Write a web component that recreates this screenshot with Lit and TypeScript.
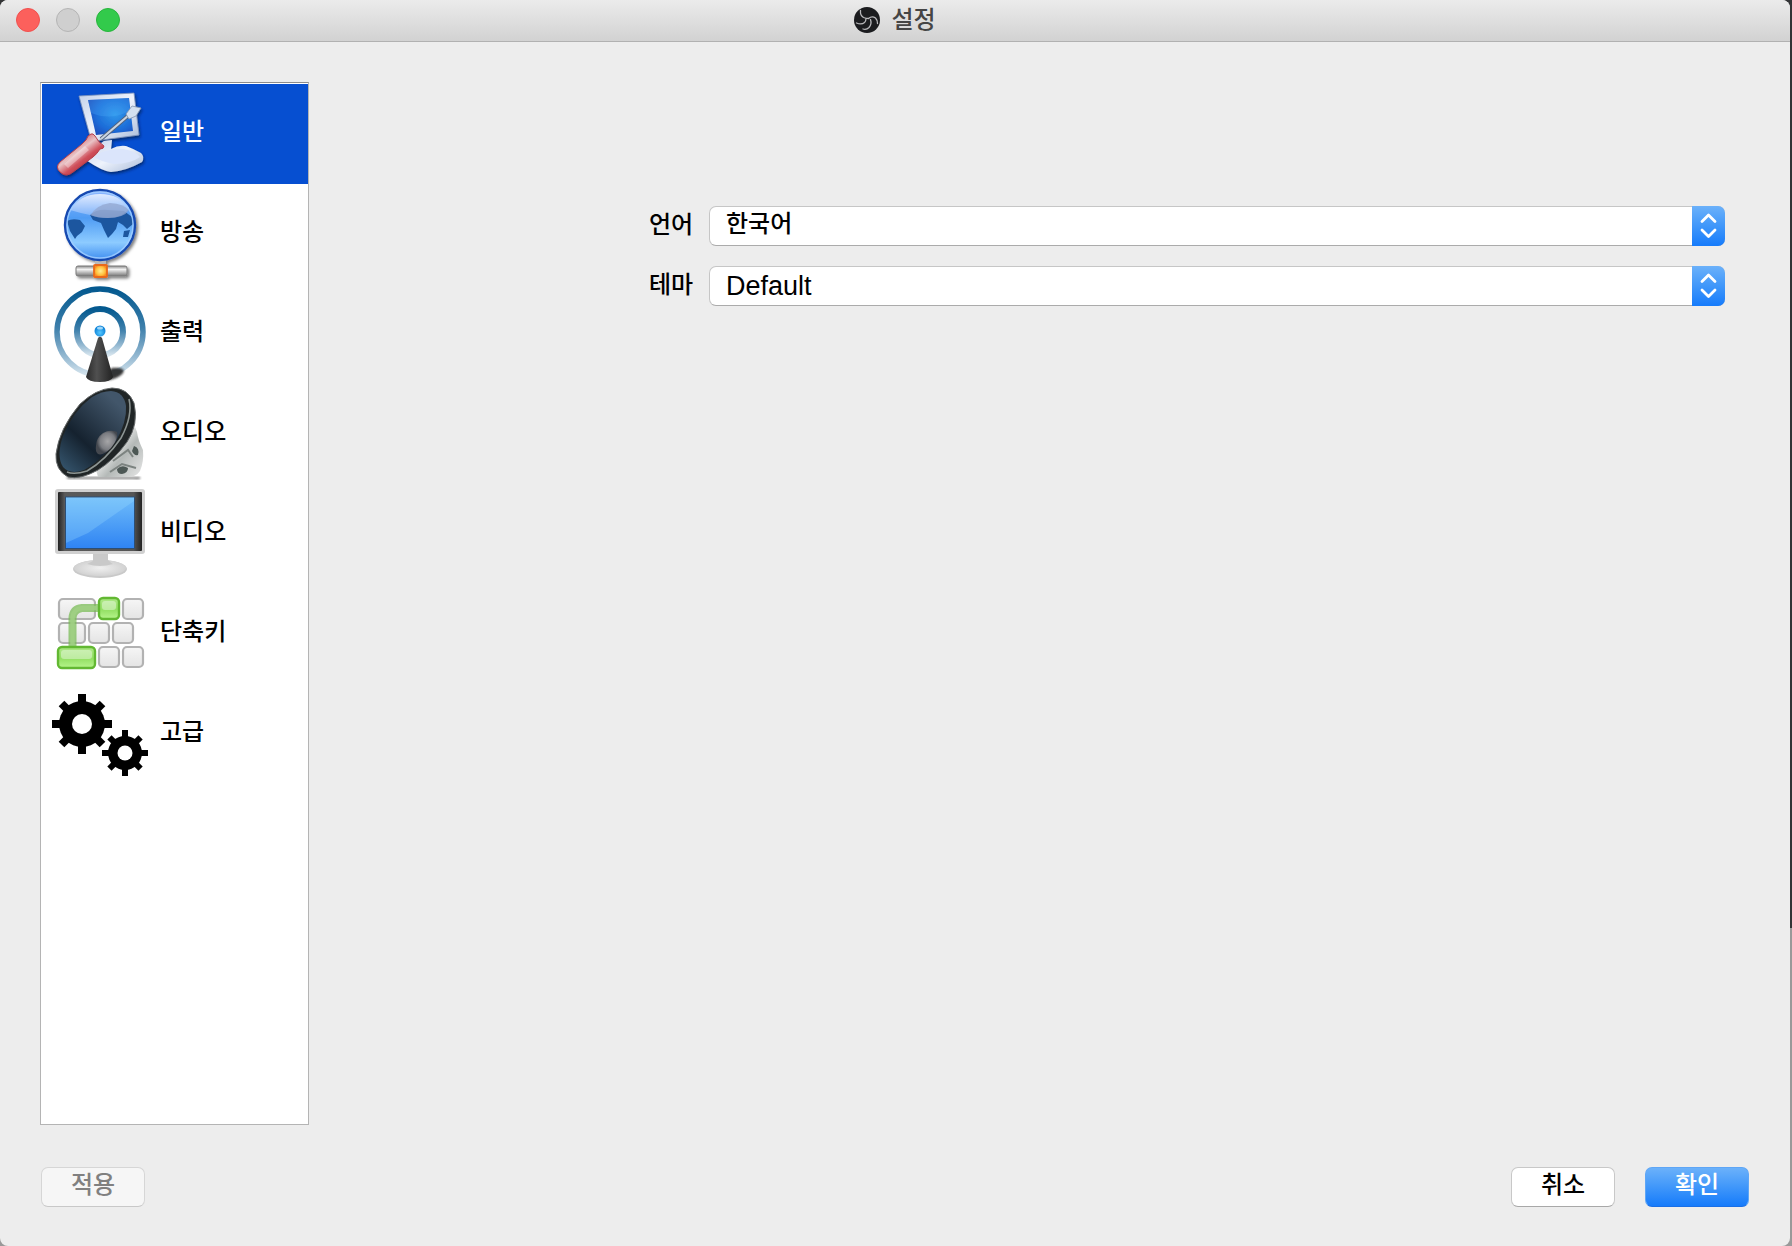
import { LitElement, html, svg, css, type SVGTemplateResult } from "lit";
import { customElement, property, state } from "lit/decorators.js";
import { classMap } from "lit/directives/class-map.js";

const teeth = (cx: number, cy: number, r: number, w: number) =>
  [0, 45, 90, 135].map((a) => {
    const reach = a % 90 ? r - 1 : r;
    return svg`<rect x=${cx - w / 2} y=${cy - reach} width=${w} height=${reach * 2} transform="rotate(${a} ${cx} ${cy})"/>`;
  });

const key = (x: number, y: number, w: number) => svg`
  <rect x=${x} y=${y} width=${w} height="20" rx="4" fill="url(#key)" stroke="#b2b2b2" stroke-width="2.2"/>`;

const greenKey = (x: number, y: number, w: number) => svg`
  <rect x=${x} y=${y} width=${w} height="21" rx="4" fill="url(#keyOn)" stroke="#62b832" stroke-width="2.4"/>
  <rect x=${x + 3} y=${y + 3} width=${w - 6} height="9" rx="3" fill="#fff" opacity=".4"/>`;

const icons: Record<string, SVGTemplateResult> = {
  general: svg`
    <defs>
      <linearGradient id="frame" x1="0" y1="0" x2="1" y2="1"><stop offset="0" stop-color="#c3d1ea"/><stop offset=".5" stop-color="#eef3fc"/><stop offset="1" stop-color="#a9bbd9"/></linearGradient>
      <radialGradient id="glass" cx=".6" cy=".45" r=".7"><stop offset="0" stop-color="#2f96ea"/><stop offset=".6" stop-color="#1c6cd8"/><stop offset="1" stop-color="#1d49b8"/></radialGradient>
      <linearGradient id="handle" x1=".2" y1=".2" x2=".75" y2=".85"><stop offset="0" stop-color="#c8444f"/><stop offset=".4" stop-color="#e9c3c6"/><stop offset=".65" stop-color="#d0505b"/><stop offset="1" stop-color="#a92735"/></linearGradient>
      <filter id="drop1" x="-20%" y="-20%" width="150%" height="150%"><feDropShadow dx="1" dy="2" stdDeviation="1.5" flood-color="#061a4a" flood-opacity=".7"/></filter>
    </defs>
    <g filter="url(#drop1)">
      <path d="M36 76Q36 71 46 67Q49 60 54 57L62 56L61 65Q68 61 76 62Q84 65 91 69Q95 73 92 78Q76 87 61 88Q52 87 36 76Z" fill="url(#frame)"/>
      <path d="M52 68Q60 65 73 65Q86 67 90 73Q80 80 64 80Q52 78 44 73Z" fill="#dbe5fb"/>
      <path d="M29 12L84 9L89 51L44 57L40 52Z" fill="url(#frame)" stroke="#7f94bb" stroke-width=".8"/>
      <path d="M38 16L79 14L83 47L46 51Z" fill="url(#glass)"/>
      <path d="M38 16L79 14L80 27Q60 37 41 29Z" fill="#55b7ff" opacity=".25"/>
      <path d="M51 55L79 31" stroke="#50617c" stroke-width="4"/>
      <path d="M51 55L79 31" stroke="#c9d3df" stroke-width="2.2"/>
      <path d="M76 30L82 22L91 24L86 32L79 35Z" fill="#d3e0f0" stroke="#8496ae" stroke-width=".8"/>
      <path d="M41 50Q43 49 45 52Q48 58 54 62Q54 65 50 65Q47 70 43 73L23 88Q16 94 10 88Q5 83 10 78L32 60Q37 56 38 52Z" fill="url(#handle)" stroke="#b6404b" stroke-width="1"/>
      <path d="M14 80L35 62L39 66L18 84Z" fill="#fff" opacity=".35"/>
    </g>`,
  stream: svg`
    <defs>
      <linearGradient id="sea" x1="0" y1="0" x2="0" y2="1"><stop offset="0" stop-color="#8fb7ff"/><stop offset=".4" stop-color="#4f9cf4"/><stop offset=".75" stop-color="#8dcbff"/><stop offset="1" stop-color="#3d8df0"/></linearGradient>
      <linearGradient id="pipe" x1="0" y1="0" x2="0" y2="1"><stop offset="0" stop-color="#8d8d8d"/><stop offset=".35" stop-color="#f2f2f2"/><stop offset="1" stop-color="#777"/></linearGradient>
      <linearGradient id="sky" x1="0" y1="0" x2="0" y2="1"><stop offset="0" stop-color="#fff" stop-opacity=".75"/><stop offset="1" stop-color="#cfdcff" stop-opacity=".3"/></linearGradient>
      <radialGradient id="hub"><stop offset="0" stop-color="#ffef96"/><stop offset=".7" stop-color="#ffbf3c"/><stop offset="1" stop-color="#f88a20"/></radialGradient>
      <filter id="drop2" x="-20%" y="-20%" width="150%" height="150%"><feDropShadow dx="2" dy="2" stdDeviation="1.4" flood-opacity=".5"/></filter>
    </defs>
    <g filter="url(#drop2)">
      <rect x="45" y="74" width="11" height="8" fill="#b9b9b9"/>
      <rect x="26" y="82" width="51" height="10" rx="2" fill="url(#pipe)" stroke="#7a7a7a"/>
      <rect x="44" y="81" width="13" height="12" rx="1" fill="url(#hub)" stroke="#e8691a" stroke-width="1.800"/>
      <circle cx="50" cy="41" r="35" fill="url(#sea)" stroke="#1849b0" stroke-width="2.400"/>
    </g>
    <path d="M17 37Q22 34 30 36L35 42L32 48L27 52L25 55L20 47ZM40 31Q46 25 58 26L74 27L82 33L83 40L77 45L73 41L68 38L66 45L62 50L58 54L54 46L51 39L43 36ZM74 47L80 46L78 53L73 53Z" fill="#1c569f"/>
    <path d="M20 26Q30 10 50 10Q70 10 79 24Q74 34 56 34Q47 34 40 31Q30 29 20 26Z" fill="url(#sky)"/>
    <path d="M41 31Q46 21 60 19Q74 20 79 26Q74 34 58 34Q47 34 41 31Z" fill="#91a5cf" opacity=".75"/>
    <circle cx="50" cy="41" r="33" fill="none" stroke="#a5d0ff" stroke-width="1.4" opacity=".8"/>`,
  output: svg`
    <defs>
      <linearGradient id="wave" x1="0" y1="0" x2="0" y2="1"><stop offset="0" stop-color="#04598f"/><stop offset=".45" stop-color="#3d7fab"/><stop offset=".8" stop-color="#98bbd3"/><stop offset="1" stop-color="#d5e4ed"/></linearGradient>
      <linearGradient id="mast" x1="0" y1="0" x2="1" y2="0"><stop offset="0" stop-color="#2a2a2a"/><stop offset=".4" stop-color="#505050"/><stop offset="1" stop-color="#222"/></linearGradient>
      <radialGradient id="ball" cy=".65"><stop offset="0" stop-color="#55c8ff"/><stop offset="1" stop-color="#1387da"/></radialGradient>
      <filter id="soft3"><feGaussianBlur stdDeviation="1.3"/></filter>
    </defs>
    <circle cx="50" cy="48" r="43" fill="none" stroke="url(#wave)" stroke-width="5.5"/>
    <circle cx="50" cy="48" r="23" fill="none" stroke="url(#wave)" stroke-width="6"/>
    <path d="M50 94L62 84Q72 83 74 87Q72 93 60 96Z" fill="#222" opacity=".9" filter="url(#soft3)"/>
    <path d="M48 54Q50 51 52 54L63 93Q61 98 50 98Q38 98 36 93Z" fill="url(#mast)"/>
    <circle cx="50" cy="47" r="5.5" fill="url(#ball)"/>
    <ellipse cx="50" cy="44" rx="3" ry="1.6" fill="#bfe8ff" opacity=".8"/>`,
  audio: svg`
    <defs>
      <linearGradient id="magnet" x1="0" y1="0" x2="1" y2="1"><stop offset="0" stop-color="#666"/><stop offset=".35" stop-color="#f5f5f5"/><stop offset=".6" stop-color="#b4b9b7"/><stop offset="1" stop-color="#e8e8e8"/></linearGradient>
      <linearGradient id="cone" x1=".1" y1="1" x2=".8" y2=".1"><stop offset="0" stop-color="#34536b"/><stop offset=".4" stop-color="#15222f"/><stop offset="1" stop-color="#42566a"/></linearGradient>
      <radialGradient id="dust" cx=".55" cy=".45"><stop offset="0" stop-color="#a6a6a8"/><stop offset=".7" stop-color="#7b7d82"/><stop offset="1" stop-color="#44484f"/></radialGradient>
      <filter id="soft4"><feGaussianBlur stdDeviation="1"/></filter>
    </defs>
    <path d="M16 93H90Q92 96 84 95H18Z" fill="#444" opacity=".7" filter="url(#soft4)"/>
    <path d="M83 38L87 48Q88 56 93 66Q94 78 90 87Q86 93 78 93H48L46 86Z" fill="url(#magnet)"/>
    <path d="M84 62Q90 64 88 71Q84 72 82 67ZM67 85Q72 80 78 84Q78 89 72 90Q67 90 67 85Z" fill="#4d5855"/>
    <path d="M63 77L78 66L83 73M60 88L72 80L86 84" fill="none" stroke="#7c8380" stroke-width="2"/>
    <path d="M62 4Q78 4 84 19Q89 40 77 58Q64 76 48 86Q30 96 18 93Q5 86 6 70Q9 45 30 20Q46 5 62 4Z" fill="#202526" stroke="#65696a" stroke-width="1"/>
    <path d="M61 7Q74 8 76 22Q77 38 66 57Q50 78 34 86Q20 91 13 83Q6 72 13 52Q23 27 42 13Q52 7 61 7Z" fill="url(#cone)"/>
    <path d="M79 15Q83 32 71 54Q56 76 37 87Q24 91 17 88" fill="none" stroke="#8d9593" stroke-width="1.6"/>
    <path d="M46 62Q46 54 53 49Q60 45 67 48Q69 54 61 64Q53 72 48 70Q45 67 46 62Z" fill="url(#dust)"/>`,
  video: svg`
    <defs>
      <linearGradient id="panel" x1="0" y1="0" x2="0" y2="1"><stop offset="0" stop-color="#6fbcfa"/><stop offset="1" stop-color="#2f84f3"/></linearGradient>
      <linearGradient id="bezel" x1="0" y1="0" x2="1" y2="0"><stop offset="0" stop-color="#222"/><stop offset=".08" stop-color="#5a5a5a"/><stop offset=".9" stop-color="#555"/><stop offset="1" stop-color="#222"/></linearGradient>
      <radialGradient id="foot"><stop offset="0" stop-color="#f0f0f0"/><stop offset="1" stop-color="#d2d2d2"/></radialGradient>
      <filter id="soft5"><feGaussianBlur stdDeviation=".7"/></filter>
    </defs>
    <ellipse cx="50" cy="85" rx="27" ry="9" fill="#c9c9c9" filter="url(#soft5)"/>
    <ellipse cx="50" cy="84" rx="26" ry="8" fill="url(#foot)"/>
    <path d="M43 69H58V76Q61 79 63 80Q50 84 37 80L43 77Z" fill="#c9c9c9"/>
    <rect x="5" y="5" width="90" height="65" rx="3" fill="#d0d0d0" filter="url(#soft5)"/>
    <rect x="8" y="8" width="84" height="59" rx="1" fill="url(#bezel)"/>
    <rect x="15" y="12.5" width="70" height="52.5" fill="#2c4e75"/>
    <rect x="16" y="13.5" width="68" height="50.5" fill="url(#panel)"/>
    <path d="M16 13.5H84V17L38 49L16 59Z" fill="#9ee0ff" opacity=".28"/>`,
  hotkeys: svg`
    <defs>
      <linearGradient id="key" x1="0" y1="0" x2="0" y2="1"><stop offset="0" stop-color="#f6f6f6"/><stop offset="1" stop-color="#e4e4e4"/></linearGradient>
      <linearGradient id="keyOn" x1="0" y1="0" x2="0" y2="1"><stop offset="0" stop-color="#aee888"/><stop offset=".55" stop-color="#93df63"/><stop offset="1" stop-color="#b6f58c"/></linearGradient>
    </defs>
    ${key(9, 15, 36)}${key(73, 15, 20)}
    ${key(9, 39, 26)}${key(39, 39, 20)}${key(63, 39, 20)}
    ${key(49, 63, 20)}${key(73, 63, 20)}
    <path d="M48 24H32Q23 25 22.5 34V63" fill="none" stroke="#74b94e" stroke-width="8" opacity=".7"/>
    <path d="M48 24H32Q23 25 22.5 34V63" fill="none" stroke="#a0cf84" stroke-width="4.5" opacity=".9"/>
    ${greenKey(49, 14, 20)}${greenKey(8, 63, 37)}`,
  advanced: svg`
    ${teeth(32, 40, 30, 8)}
    <circle cx="32" cy="40" r="23"/><circle cx="32" cy="40" r="10" fill="#fff"/>
    ${teeth(75, 69, 23, 6)}
    <circle cx="75" cy="69" r="17"/><circle cx="75" cy="69" r="7.5" fill="#fff"/>`,
};

const pages = [
  { id: "general", label: "일반" },
  { id: "stream", label: "방송" },
  { id: "output", label: "출력" },
  { id: "audio", label: "오디오" },
  { id: "video", label: "비디오" },
  { id: "hotkeys", label: "단축키" },
  { id: "advanced", label: "고급" },
];

@customElement("settings-nav")
class SettingsNav extends LitElement {
  @state() private current = "general";

  static styles = css`
    :host {
      display: block;
      box-sizing: border-box;
      padding: 1px 0 1px 1px;
      border: 1px solid #b4b4b4;
      border-top-color: #8c8c8c;
      background: #fff;
    }
    .list {
      margin: 0;
      padding: 0;
      list-style: none;
    }
    .item {
      display: flex;
      align-items: center;
      gap: 10px;
      width: 100%;
      height: 100px;
      padding: 0 8px;
      border: 0;
      background: none;
      color: #000;
      font: inherit;
      text-align: left;
    }
    .item.current {
      background: #064fd1;
      color: #fff;
    }
    .icon {
      flex: none;
      width: 100px;
      height: 100px;
    }
    .label {
      padding-bottom: 4px;
    }
  `;

  render() {
    return html`<nav aria-label="설정">
      <ul class="list">
        ${pages.map(
          (p) => html`<li>
            <button
              class=${classMap({ item: true, current: p.id === this.current })}
              aria-current=${p.id === this.current ? "page" : "false"}
              @click=${() => (this.current = p.id)}
            >
              <svg class="icon" viewBox="0 0 100 100" aria-hidden="true">${icons[p.id]}</svg>
              <span class="label">${p.label}</span>
            </button>
          </li>`,
        )}
      </ul>
    </nav>`;
  }
}

@customElement("settings-select")
class SettingsSelect extends LitElement {
  @property() label = "";
  @property({ type: Boolean }) latin = false;
  @property({ attribute: false }) options: string[] = [];

  static styles = css`
    :host {
      display: block;
    }
    .row {
      display: grid;
      grid-template-columns: 44px 1fr;
      align-items: center;
      gap: 16px;
    }
    .label {
      padding-bottom: 2px;
      white-space: nowrap;
    }
    .box {
      display: grid;
      grid-template-columns: 1fr 33px;
      height: 40px;
    }
    .field {
      grid-area: 1 / 1 / 2 / 3;
      appearance: none;
      min-width: 0;
      height: 40px;
      padding: 0 48px 4px 16px;
      border: 1px solid #c6c6c6;
      border-bottom-color: #ababab;
      border-radius: 7px;
      background: #fff;
      color: #000;
      font: inherit;
    }
    .field.latin {
      padding-bottom: 0;
      font-size: 27px;
    }
    .arrows {
      grid-area: 1 / 2 / 2 / 3;
      z-index: 1;
      width: 33px;
      height: 40px;
      border-radius: 0 7px 7px 0;
      background: linear-gradient(#6bb1fa, #4097fa 50%, #167bfb);
      pointer-events: none;
    }
  `;

  render() {
    return html`<div class="row">
      <label class="label" for="field">${this.label}</label>
      <div class="box">
        <select class=${classMap({ field: true, latin: this.latin })} id="field">
          ${this.options.map((o) => html`<option>${o}</option>`)}
        </select>
        <svg class="arrows" viewBox="0 0 33 40" aria-hidden="true">
          <path d="M10 15.5L16.5 9L23 15.5M10 24L16.5 30.5L23 24" fill="none" stroke="#fff" stroke-width="2.8" stroke-linecap="round" stroke-linejoin="round" />
        </svg>
      </div>
    </div>`;
  }
}

@customElement("app-root")
class AppRoot extends LitElement {
  static styles = css`
    :host {
      display: block;
      font: 500 24px/32px "Liberation Sans", "Noto Sans CJK KR", sans-serif;
      color: #000;
    }
    .desktop {
      display: flex;
      min-height: 100vh;
      padding-right: 2px;
      box-sizing: border-box;
      background: linear-gradient(#333436 74.5%, #999 74.5%);
    }
    .window {
      flex: 1;
      display: flex;
      flex-direction: column;
      border-radius: 8px;
      overflow: hidden;
      background: #ededed;
    }
    .titlebar {
      display: grid;
      grid-template-columns: 1fr auto 1fr;
      align-items: center;
      height: 42px;
      box-sizing: border-box;
      padding: 0 16px 1px;
      border-bottom: 1px solid #b1b1b1;
      background: linear-gradient(#ebebeb, #d2d2d2);
    }
    .lights {
      display: flex;
      gap: 16px;
    }
    .light {
      width: 24px;
      height: 24px;
      padding: 0;
      border: 1px solid #f0504e;
      border-radius: 50%;
      background: #fc605c;
    }
    .light.off {
      border-color: #b4b4b4;
      background: #cfcfcf;
    }
    .light.zoom {
      border-color: #27b53c;
      background: #32ca4b;
    }
    .title {
      display: flex;
      align-items: center;
      gap: 11px;
      margin: 0;
      font: inherit;
      color: #454545;
    }
    .logo {
      width: 26px;
      height: 26px;
    }
    .body {
      flex: 1;
      display: flex;
      padding: 40px 65px 42px 40px;
    }
    .nav {
      flex: none;
      width: 269px;
    }
    .form {
      flex: 1;
      display: flex;
      flex-direction: column;
      gap: 20px;
      padding: 124px 0 0 340px;
    }
    .actions {
      display: flex;
      gap: 30px;
      padding: 0 41px 39px;
    }
    .action {
      width: 104px;
      height: 40px;
      padding: 0 0 5px;
      border: 1px solid #c8c8c8;
      border-bottom-color: #a8a8a8;
      border-radius: 7px;
      background: #fff;
      color: #000;
      font: inherit;
    }
    .action.apply {
      margin-right: auto;
      border-color: #d6d6d6;
      border-bottom-color: #c8c8c8;
      background: #f6f6f6;
      color: #808080;
    }
    .action.primary {
      border-color: #5ea6f6;
      border-bottom-color: #1a6fe6;
      background: linear-gradient(#6bb1fa, #4097fa 50%, #167bfb);
      color: #fff;
    }
  `;

  render() {
    return html`<div class="desktop">
      <div class="window">
        <header class="titlebar">
          <div class="lights">
            <button class="light" aria-label="닫기"></button>
            <button class="light off" aria-label="최소화" disabled></button>
            <button class="light zoom" aria-label="확대"></button>
          </div>
          <h1 class="title">
            <svg class="logo" viewBox="0 0 26 26" aria-hidden="true">
              <circle cx="13" cy="13" r="13" fill="#1b1c1f" />
              <path d="M6.500 3.500Q6 8.500 9.500 10.500Q12 11.500 14.500 11.500Q18 8.500 21.500 11Q23.500 13 23.500 16.500M16.500 12.500Q18 17 15 20.500Q12.500 23 9 22M2.500 16Q7.500 18 10.500 15.500Q12 14 12 11.500" fill="none" stroke="#b9b9bc" stroke-width="1.300" stroke-linecap="round" />
            </svg>
            설정
          </h1>
        </header>
        <main class="body">
          <settings-nav class="nav"></settings-nav>
          <div class="form">
            <settings-select label="언어" .options=${["한국어"]}></settings-select>
            <settings-select label="테마" latin .options=${["Default"]}></settings-select>
          </div>
        </main>
        <footer class="actions">
          <button class="action apply" disabled>적용</button>
          <button class="action">취소</button>
          <button class="action primary">확인</button>
        </footer>
      </div>
    </div>`;
  }
}
